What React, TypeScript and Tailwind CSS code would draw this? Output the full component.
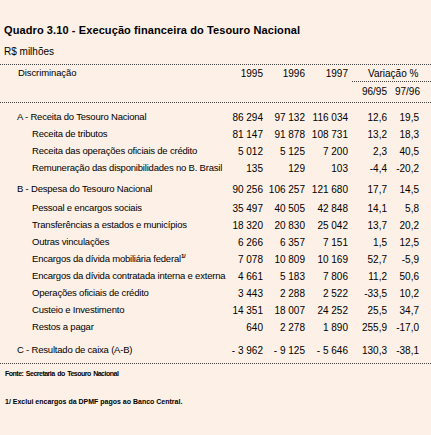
import React from 'react';

type Row = {
  label: React.ReactNode;
  values: string[];
  indent?: boolean;
  mt?: string;
};

const rows: Row[] = [
  { label: 'A - Receita do Tesouro Nacional', values: ['86 294', '97 132', '116 034', '12,6', '19,5'] },
  { label: 'Receita de tributos', values: ['81 147', '91 878', '108 731', '13,2', '18,3'], indent: true },
  { label: 'Receita das operações oficiais de crédito', values: ['5 012', '5 125', '7 200', '2,3', '40,5'], indent: true },
  { label: 'Remuneração das disponibilidades no B. Brasil', values: ['135', '129', '103', '-4,4', '-20,2'], indent: true },
  { label: 'B - Despesa do Tesouro Nacional', values: ['90 256', '106 257', '121 680', '17,7', '14,5'], mt: 'mt-[4px]' },
  { label: 'Pessoal e encargos sociais', values: ['35 497', '40 505', '42 848', '14,1', '5,8'], indent: true, mt: 'mt-[2px]' },
  { label: 'Transferências a estados e municípios', values: ['18 320', '20 830', '25 042', '13,7', '20,2'], indent: true },
  { label: 'Outras vinculações', values: ['6 266', '6 357', '7 151', '1,5', '12,5'], indent: true },
  {
    label: (
      <>
        Encargos da dívida mobiliária federal
        <span className="relative top-[-4px] text-[6px] font-bold">1/</span>
      </>
    ),
    values: ['7 078', '10 809', '10 169', '52,7', '-5,9'],
    indent: true,
  },
  { label: 'Encargos da dívida contratada interna e externa', values: ['4 661', '5 183', '7 806', '11,2', '50,6'], indent: true },
  { label: 'Operações oficiais de crédito', values: ['3 443', '2 288', '2 522', '-33,5', '10,2'], indent: true },
  { label: 'Custeio e Investimento', values: ['14 351', '18 007', '24 252', '25,5', '34,7'], indent: true },
  { label: 'Restos a pagar', values: ['640', '2 278', '1 890', '255,9', '-17,0'], indent: true },
  { label: 'C - Resultado de caixa (A-B)', values: ['- 3 962', '- 9 125', '- 5 646', '130,3', '-38,1'], mt: 'mt-[6px]' },
];

const colWidths = ['w-[38px]', 'w-[42px]', 'w-[43px]', 'w-[39px]', 'w-[32px]'];

const DataRow: React.FC<{ row: Row }> = ({ row }) => (
  <div className={`flex items-center h-[17px] ${row.mt ?? ''}`}>
    <div
      className={`w-[225px] shrink-0 whitespace-nowrap text-[9.5px] tracking-[-0.2px] ${row.indent ? 'pl-[32px]' : 'pl-[17px]'}`}
    >
      {row.label}
    </div>
    {row.values.map((v, i) => (
      <div key={i} className={`${colWidths[i]} shrink-0 text-right whitespace-nowrap`}>
        {v}
      </div>
    ))}
  </div>
);

const App: React.FC = () => {
  return (
    <div
      className="w-[431px] h-[435px] bg-[#fdf0e7] text-black overflow-hidden"
      style={{ fontFamily: '"Liberation Sans", Arial, sans-serif' }}
    >
      <div className="pt-[23px] pl-[4px] text-[11px] font-bold leading-[14px] tracking-[0.1px]">
        Quadro 3.10 - Execução financeira do Tesouro Nacional
      </div>
      <div className="pt-[8px] pl-[4px] text-[10px] leading-[14px]">R$ milhões</div>

      <div className="mt-[5px] border-t border-dotted border-[#444]" />

      <div className="text-[10px]">
        <div className="flex items-center h-[16px]">
          <div className="w-[225px] shrink-0 pl-[18px] text-[9.5px] tracking-[-0.1px]">Discriminação</div>
          <div className="w-[38px] text-right">1995</div>
          <div className="w-[42px] text-right">1996</div>
          <div className="w-[43px] text-right">1997</div>
          <div className="w-[83px] pl-[20px]">Variação %</div>
        </div>
        <div className="flex">
          <div className="flex-1" />
          <div className="w-[79px] border-t border-dotted border-[#444]" />
        </div>
        <div className="flex items-center h-[19px]">
          <div className="flex-1" />
          <div className="w-[39px] text-right">96/95</div>
          <div className="w-[33px] text-right">97/96</div>
          <div className="w-[11px]" />
        </div>
        <div className="mt-[1px] border-t border-dotted border-[#444]" />

        <div className="pt-[6px]">
          {rows.map((r, i) => (
            <DataRow key={i} row={r} />
          ))}
        </div>

        <div className="mt-[4px] border-t border-dotted border-[#444]" />
      </div>

      <div className="pl-[5px] pt-[5px] text-[7px] font-bold leading-[10px] tracking-[-0.5px] [word-spacing:1px]">
        Fonte: Secretaria do Tesouro Nacional
      </div>
      <div className="pl-[5px] pt-[18px] text-[7px] font-bold leading-[10px] tracking-[0px]">
        1/ Exclui encargos da DPMF pagos ao Banco Central.
      </div>
    </div>
  );
};

export default App;
